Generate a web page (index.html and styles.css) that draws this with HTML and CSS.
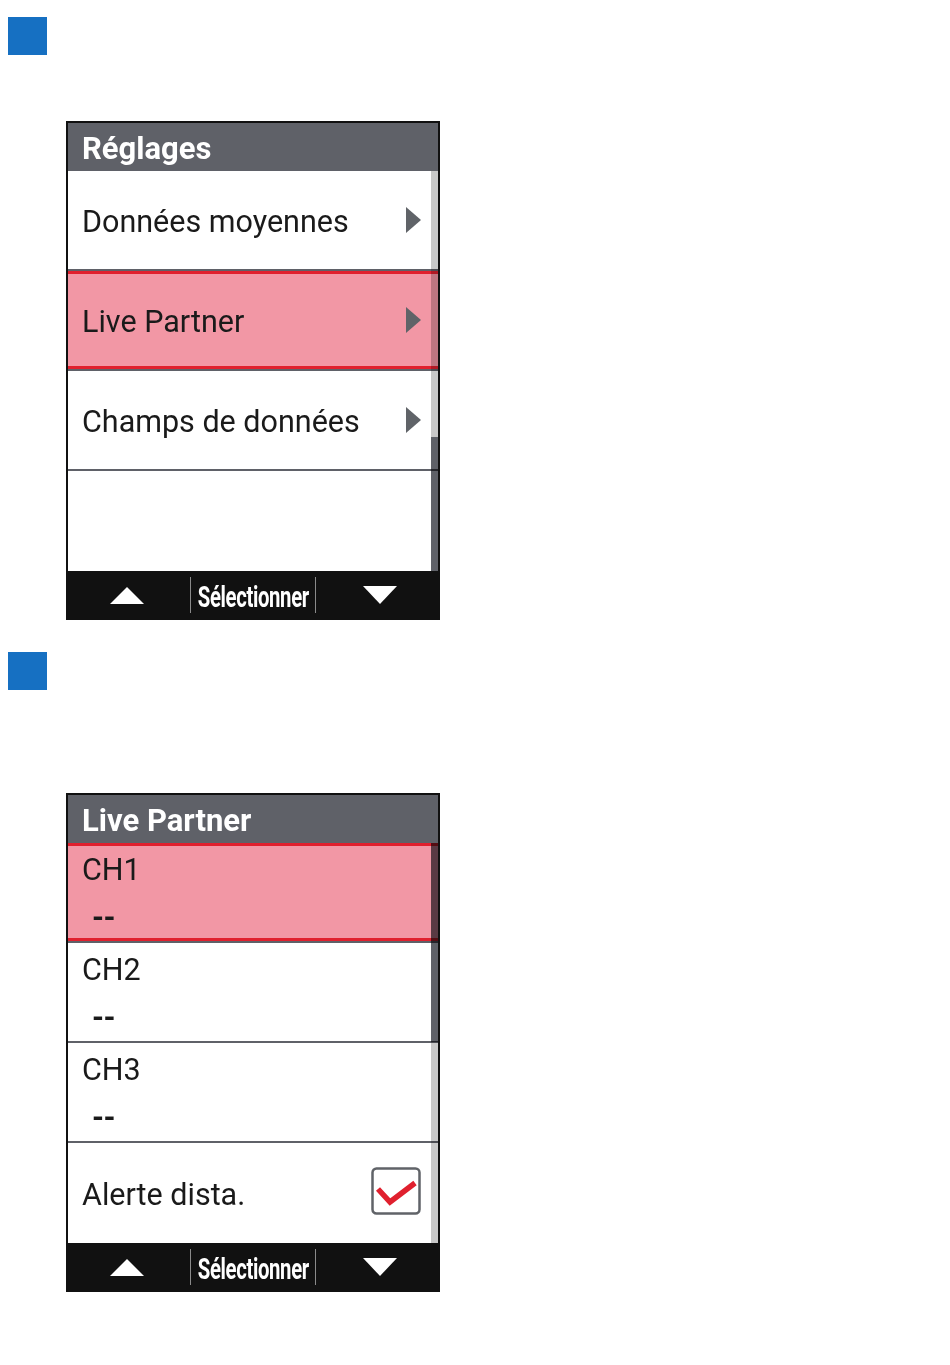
FILE: index.html
```html
<!DOCTYPE html>
<html lang="fr">
<head>
    <meta charset="UTF-8">
    <meta name="viewport" content="width=device-width, initial-scale=1.0">
    <title>Live Partner</title>
    <link rel="stylesheet" href="styles.css">
</head>
<body>

    <!-- Étape 1 : menu Réglages -->
    <section class="step">
        <div class="step-mark"></div>
        <div class="device first">
            <div class="device-title">Réglages</div>
            <div class="menu">
                <div class="menu-row">
                    <span class="label">Données moyennes</span>
                    <span class="arrow"></span>
                </div>
                <div class="menu-row selected">
                    <span class="label">Live Partner</span>
                    <span class="arrow"></span>
                </div>
                <div class="menu-row">
                    <span class="label">Champs de données</span>
                    <span class="arrow"></span>
                </div>
                <div class="menu-row last"></div>
                <div class="scrollbar"><div class="thumb" style="top: 266px; height: 134px;"></div></div>
            </div>
            <div class="softkeys">
                <div class="key"><span class="tri-up"></span></div>
                <div class="key middle"><span class="key-text">Sélectionner</span></div>
                <div class="key"><span class="tri-down"></span></div>
            </div>
        </div>
    </section>

    <!-- Étape 2 : écran Live Partner -->
    <section class="step">
        <div class="step-mark second"></div>
        <div class="device second">
            <div class="device-title">Live Partner</div>
            <div class="menu">
                <div class="menu-row channel selected">
                    <span class="label">CH1</span>
                    <span class="value">--</span>
                </div>
                <div class="menu-row channel">
                    <span class="label">CH2</span>
                    <span class="value">--</span>
                </div>
                <div class="menu-row channel">
                    <span class="label">CH3</span>
                    <span class="value">--</span>
                </div>
                <div class="menu-row last">
                    <span class="label">Alerte dista.</span>
                    <svg class="checkbox" width="50" height="48" viewBox="0 0 50 48">
                        <rect x="1.5" y="1.5" width="47" height="45" rx="4" fill="#fff" stroke="#606368" stroke-width="2.5"/>
                        <path d="M7 22 L19 35 L44 16" fill="none" stroke="#e0202e" stroke-width="5.5" stroke-linejoin="miter"/>
                    </svg>
                </div>
                <div class="scrollbar"><div class="thumb" style="top: 0px; height: 199px;"></div></div>
            </div>
            <div class="softkeys">
                <div class="key"><span class="tri-up"></span></div>
                <div class="key middle"><span class="key-text">Sélectionner</span></div>
                <div class="key"><span class="tri-down"></span></div>
            </div>
        </div>
    </section>

</body>
</html>
```

FILE: styles.css
```css
body {
    margin: 0;
    background-color: #fff;
    font-family: Roboto, 'Liberation Sans', sans-serif;
    color: #1a1a1a;
}
.step-mark {
    width: 39px;
    height: 38px;
    margin: 17px 0 0 8px;
    background-color: #1670c2;
}
.step-mark.second {
    margin-top: 32px;
}
.device {
    width: 370px;
    margin-left: 66px;
    border: 2px solid #111;
    background-color: #fff;
}
.device.first {
    margin-top: 66px;
}
.device.second {
    margin-top: 103px;
}
.device-title {
    height: 48px;
    line-height: 51px;
    padding-left: 14px;
    background-color: #5f6168;
    color: #fff;
    font-weight: bold;
    font-size: 31px;
}
.menu {
    position: relative;
}
.menu-row {
    box-sizing: border-box;
    height: 100px;
    display: flex;
    align-items: center;
    justify-content: space-between;
    padding: 3px 17px 0 14px;
    border-bottom: 2px solid #5f6168;
    font-size: 30.5px;
}
.menu-row.last {
    border-bottom: none;
}
.menu-row.selected {
    background-color: #f297a5;
    box-shadow: inset 0 3px #e0202e, inset 0 -3px #e0202e;
}
.menu-row.channel {
    flex-direction: column;
    align-items: flex-start;
    justify-content: flex-start;
    padding-top: 4px;
    line-height: 46px;
}
.menu-row.channel .value {
    padding: 2px 0 0 10px;
    font-weight: bold;
    letter-spacing: -0.5px;
}
.arrow {
    width: 0;
    height: 0;
    margin-top: -3px;
    border-top: 13px solid transparent;
    border-bottom: 13px solid transparent;
    border-left: 15px solid #606368;
}
.checkbox {
    display: block;
    margin-top: -8px;
}
.scrollbar {
    position: absolute;
    top: 0;
    right: 0;
    width: 7px;
    height: 400px;
    background-color: #c8c8c8;
    mix-blend-mode: multiply;
}
.thumb {
    position: absolute;
    left: 0;
    width: 7px;
    background-color: #5f6168;
}
.softkeys {
    height: 47px;
    display: grid;
    grid-template-columns: 122px 126px 122px;
    background-color: #111;
}
.key {
    display: flex;
    align-items: center;
    justify-content: center;
}
.key.middle {
    margin: 6px 0 5px;
    border-left: 1px solid #8a8a8a;
    border-right: 1px solid #8a8a8a;
    overflow: hidden;
}
.key-text {
    display: inline-block;
    padding-top: 3px;
    color: #fff;
    font-weight: bold;
    font-size: 29px;
    letter-spacing: -0.5px;
    transform: scaleX(0.7);
    white-space: nowrap;
}
.tri-up {
    width: 0;
    height: 0;
    margin: 2px 4px 0 0;
    border-left: 17px solid transparent;
    border-right: 17px solid transparent;
    border-bottom: 17px solid #fff;
}
.tri-down {
    width: 0;
    height: 0;
    margin-left: 6px;
    border-left: 17px solid transparent;
    border-right: 17px solid transparent;
    border-top: 18px solid #fff;
}
```
